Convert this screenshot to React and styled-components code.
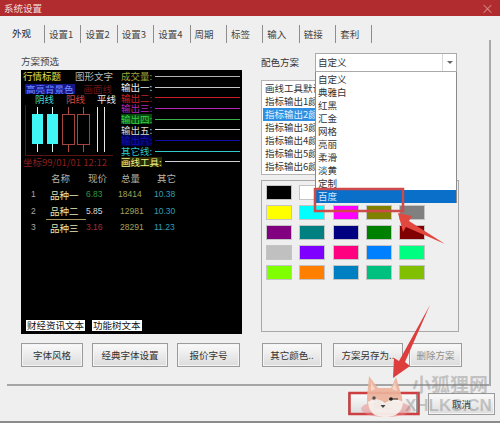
import React from "react";
import styled, { createGlobalStyle } from "styled-components";

const Global = createGlobalStyle`
  html, body { margin: 0; padding: 0; background: #f0f0f0; }
  * { box-sizing: border-box; }
`;
const FONT = `"Noto Sans CJK SC", "Noto Sans", sans-serif`;

const Window = styled.div`
  position: relative; width: 500px; height: 423px; overflow: hidden;
  display: flex; flex-direction: column;
  background: #efefef; font: 9.5px/1.1 ${FONT}; color: #333;
  border-bottom: 2px solid #8c8c8c;
`;
const TitleBar = styled.div`
  height: 16px; flex: none; background: #b12c2f; color: #f1dcdc;
  display: flex; align-items: center; justify-content: space-between;
  padding: 0 4px; font-size: 9.5px;
`;
const Close = styled.span`color: #d98a88; font-size: 13px; margin-right: 2px;`;
const TabBar = styled.div`
  height: 28px; margin-bottom: -4px; padding: 9px 0 0 8px; display: flex; flex: none;
`;
const Tab = styled.div`
  width: ${p => (p.$active ? 36 : 36.4)}px; height: 18px; display: flex; align-items: center;
  padding-left: 4px; color: #444;
  border-left: ${p => (p.$active ? "none" : "1px solid #8d8d8d")};
  ${p => p.$last && "border-right: 1px solid #8d8d8d;"}
  ${p => p.$active && "padding-bottom: 2px; color: #222;"}
`;
const Panel = styled.div`
  margin-left: 7px; width: 484px; height: 346px; flex: none; padding: 12px 0 0 13px;
  border-right: 2px solid #a9a9a9; border-bottom: 2px solid #a5a5a5;
`;
const Main = styled.div`display: flex; height: 282px;`;
const LeftCol = styled.div`width: 222px; display: flex; flex-direction: column;`;
const Caption = styled.div`height: 18px; padding-left: 1px; display: flex; align-items: center; color: #444;`;
const Preview = styled.div`
  width: 221px; height: 264px; background: #000; display: flex; flex-direction: column;
  font-size: 9.5px; margin-left: 1px;
`;
const Upper = styled.div`display: flex; height: 98px; flex: none;`;
const ChartSide = styled.div`width: 100px; flex: none; display: flex; flex-direction: column; padding-top: 1px;`;
const TextLine = styled.div`
  display: flex; height: ${p => p.$h || 10}px; margin-top: ${p => p.$mt || 0}px;
  padding-left: ${p => p.$pl || 0}px; gap: ${p => p.$gap || 0}px; align-items: center;
`;
const Tone = styled.span`color: ${p => p.$c}; background: ${p => p.$bg || "transparent"}; white-space: nowrap; ${p => p.$bg && "padding: 0 1px;"}`;
const Legend = styled.div`flex: 1; padding-top: 1px; padding-right: 2px;`;
const LegendRow = styled.div`display: flex; align-items: center; height: 10.7px; gap: 3px;`;
const LegendLabel = styled.span`color: ${p => p.$c}; background: ${p => p.$bg || "transparent"}; white-space: nowrap;`;
const LegendLine = styled.i`flex: 1; height: 1px; background: ${p => p.$c};`;
const QuoteGrid = styled.div`
  display: grid; grid-template-columns: 27px 38px 32px 36px 1fr;
  grid-auto-rows: 16.5px; margin-top: 2px; align-items: center;
`;
const Head = styled.div`color: #b5b5a8; padding-left: ${p => p.$pl || 0}px;`;
const Cell = styled.div`
  color: ${p => p.$c}; font: 8.5px/1.1 "Liberation Sans", sans-serif; padding-left: ${p => p.$pl || 0}px;
`;
const Name = styled.div`
  color: #e6e6b8; margin-left: -2px; padding-left: 4px; height: 100%; display: flex; align-items: center;
  ${p => p.$sel && "border-bottom: 1px solid #a8985f;"}
`;
const Footer = styled.div`margin-top: auto; display: flex; gap: 7px; padding: 0 0 3px 5px;`;
const Tag = styled.div`background: #fff; color: #111; height: 11px; display: flex; align-items: center; padding: 0 1px;`;
const RightCol = styled.div`width: 200px; margin-left: 19px; padding-top: 1px; position: relative;`;
const ComboRow = styled.div`display: flex; align-items: center; height: 19px;`;
const ComboLabel = styled.div`width: 54px; flex: none; color: #333;`;
const Combo = styled.div`
  position: relative; width: 142px; height: 19px; background: #fff; border: 1px solid #aaa;
  display: flex; align-items: center; justify-content: space-between; padding-left: 2px; color: #333;
`;
const Arrow = styled.div`
  width: 14px; height: 100%; border-left: 1px solid #d8d8d8; display: flex; align-items: center; justify-content: center;
  &::after { content: ""; border: 3px solid transparent; border-top: 3px solid #666; margin-top: 3px; }
`;
const DropList = styled.div`
  position: absolute; left: -1px; top: 18px; width: 142px; height: 131px; background: #fff;
  border: 1px solid #8a8a8a; border-top: none; padding-top: 1px; z-index: 2;
`;
const DropItem = styled.div`
  height: 13px; display: flex; align-items: center; padding-left: 2px; color: ${p => (p.$sel ? "#cfe6ff" : "#333")};
  background: ${p => (p.$sel ? "#0a6fc9" : "transparent")};
`;
const ListBox = styled.div`
  margin-top: 8px; width: 190px; height: 95px; background: #fff; border: 1px solid #b4b4b4; padding: 1px;
`;
const ListItem = styled.div`
  height: 13px; display: flex; align-items: center; padding-left: 2px; white-space: nowrap;
  color: ${p => (p.$sel ? "#e4f1ff" : "#333")}; background: ${p => (p.$sel ? "#2f8fe0" : "transparent")};
`;
const ColorBox = styled.div`
  margin-top: 5px; width: 198px; height: 152px; border: 1px solid #a8a8a8; padding: 4px;
  display: grid; grid-template-columns: repeat(5, 26px); column-gap: 7.3px; row-gap: 5px; grid-auto-rows: 15px;
  align-content: start;
`;
const Swatch = styled.div`background: ${p => p.$c}; border: 1px solid #c4c4c4;`;
const ButtonRow = styled.div`display: flex; margin-top: 9px; padding-left: 1px;`;
const Btn = styled.div`
  width: ${p => p.$w}px; height: ${p => p.$h || 24}px; margin-left: ${p => p.$ml || 0}px; flex: none;
  display: flex; align-items: center; justify-content: center;
  background: linear-gradient(#fafafa, #dcdcdc); border: 1px solid #9b9b9b;
  color: ${p => (p.$off ? "#8e8e8e" : "#333")};
  box-shadow: inset 0 0 0 1px #f4f4f4;
`;
const BottomBar = styled.div`display: flex; justify-content: flex-end; padding: 7px 5px 0 0;`;
const Overlay = styled.svg`position: absolute; left: 0; top: 0; pointer-events: none; z-index: 5;`;
const Watermark = styled.div`
  position: absolute; left: 405px; top: 373px; width: 90px; z-index: 6;
  color: rgba(120, 120, 120, .38); font-weight: 700; pointer-events: none;
`;
const WmCn = styled.div`font-size: 19px; line-height: 21px; padding-left: 7px;`;
const WmEn = styled.div`font: 700 17px/19px "Liberation Sans", sans-serif; margin-top: 2px;`;

const tabs = ["设置1", "设置2", "设置3", "设置4", "周期", "标签", "输入", "链接", "套利"];
const legend = [
  ["成交量:", "#a3a33a", "#b5b5b5"], ["输出一:", "#f0f0f0", "#c8c8c8"], ["输出二:", "#c8202a", "#c8202a"],
  ["输出三:", "#b328b3", "#b328b3"], ["输出四:", "#38d048", "#38b048", "#064a10"], ["输出五:", "#dcdcdc", "#d8d8d8"],
  ["输出六:", "#1010b0", "#1010a8", "#000050"], ["其它线:", "#30c8c8", "#30c8c8"], ["画线工具:", "#f0f088", "#d0d0d0", "#2a2a00"],
];
const rows = [
  ["1", "品种一", "6.83", "#2f9a3c", "18414", "10.38", false, 2],
  ["2", "品种二", "5.85", "#d8d8d8", "12981", "10.30", true, 4],
  ["3", "品种三", "3.16", "#a52d3a", "28291", "11.23", false, 4],
];
const dropItems = ["自定义", "典雅白", "红黑", "汇金", "网格", "亮丽", "柔滑", "淡黄", "定制", "百度"];
const listItems = ["画线工具默认颜色", "指标输出1颜色", "指标输出2颜色", "指标输出3颜色", "指标输出4颜色", "指标输出5颜色", "指标输出6颜色"];
const swatches = ["#000", "#fff", "#f00", "#0f0", "#00f",
  "#ff0", "#0ff", "#f0f", "#808000", "#808080",
  "#800080", "#008080", "#000080", "#008000", "#800000",
  "#c0c0c0", "#8000ff", "#ff0080", "#0080ff", "#00ff80",
  "#80ff00", "#ff8000", "#0080c0", "#00c080", "#80c000"];
const buttons = [["字体风格", 62, 0], ["经典字体设置", 76, 9], ["报价字号", 63, 9], ["其它颜色..", 60, 22], ["方案另存为..", 70, 11], ["删除方案", 53, 6, true]];

const Candles = () => (
  <svg width="100" height="52" viewBox="0 0 100 52" style={{ display: "block", flex: "none" }}>
    <path d="M4.5 0V50.5H92" fill="none" stroke="#5a1414" />
    {[11, 26].map(x => (
      <g key={x}>
        <path d={`M${x + 5.5} 2V47`} stroke="#d8f8f8" />
        <rect x={x} y="9" width="11" height="30" fill="#3ff5f5" />
      </g>
    ))}
    {[41, 56].map(x => (
      <g key={x}>
        <path d={`M${x + 6.5} 2V47`} stroke="#b04a44" />
        <rect x={x + 0.5} y="9.5" width="12" height="30" fill="#000" stroke="#a5453f" />
      </g>
    ))}
    <path d="M76.5 2V47M83.5 2V47" stroke="#e8e8e8" />
  </svg>
);

const Annotations = () => (
  <Overlay width="500" height="423" viewBox="0 0 500 423">
    <rect x="315" y="189" width="88" height="22" fill="none" stroke="#cf4a4a" strokeWidth="2.5" />
    <polygon points="398,213 412,216 409,221 445,244 406,227 403,232" fill="#e2483f" />
    <rect x="349.5" y="393" width="69" height="21" fill="none" stroke="#cd3f41" strokeWidth="2.5" />
    <polygon points="430,305 405,362 410,366 393,378 394,358 399,361" fill="#dd3d3d" />
    <ellipse cx="386" cy="409" rx="25" ry="8" fill="#e88" opacity=".5" />
    <g opacity=".92">
      <path d="M369 376 L378 388 L391 388 L396 377 L402 397 Q404 417 385 417 Q366 417 367 397 Z" fill="#edb39c" />
      <path d="M368 402 Q376 396 385 403 Q394 396 403 402 Q402 417 385 417 Q369 417 368 402 Z" fill="#f7f2ee" />
      <path d="M371 382 L375 389 L371 391 Z M395 382 L392 389 L397 391 Z" fill="#f5d5c8" />
    </g>
    <circle cx="374" cy="398" r="1.8" fill="#555" />
    <circle cx="391" cy="399" r="1.8" fill="#222" />
    <path d="M389 399H398" stroke="#222" strokeWidth="1" />
    <path d="M380.500 405h5l-2.500 3z" fill="#444" />
  </Overlay>
);

export default function App() {
  return (
    <Window>
      <Global />
      <TitleBar>系统设置<Close>×</Close></TitleBar>
      <TabBar>
        <Tab $active>外观</Tab>
        {tabs.map((t, i) => <Tab key={t} $last={i === tabs.length - 1}>{t}</Tab>)}
      </TabBar>
      <Panel>
        <Main>
          <LeftCol>
            <Caption>方案预选</Caption>
            <Preview>
              <Upper>
                <ChartSide>
                  <TextLine $h={11} $pl={2} $gap={14}>
                    <Tone $c="#e6e24a">行情标题</Tone>
                    <Tone $c="#b8b8b8">图形文字</Tone>
                  </TextLine>
                  <TextLine $mt={2} $pl={4} $gap={9}>
                    <Tone $c="#6f8cff" $bg="#15158c">高亮背景色</Tone>
                    <Tone $c="#6a1616">画面线</Tone>
                  </TextLine>
                  <TextLine $h={11} $pl={14} $gap={12}>
                    <Tone $c="#40d8d0">阴线</Tone>
                    <Tone $c="#d04a44">阳线</Tone>
                    <Tone $c="#eee">平线</Tone>
                  </TextLine>
                  <Candles />
                  <TextLine $pl={2}><Tone $c="#8c1f1f">坐标99/01/01 12:12</Tone></TextLine>
                </ChartSide>
                <Legend>
                  {legend.map(([l, c, lc, bg]) => (
                    <LegendRow key={l}>
                      <LegendLabel $c={c} $bg={bg}>{l}</LegendLabel>
                      <LegendLine $c={lc} />
                    </LegendRow>
                  ))}
                </Legend>
              </Upper>
              <QuoteGrid>
                <span />
                <Head $pl={3}>名称</Head>
                <Head $pl={2}>现价</Head>
                <Head $pl={3}>总量</Head>
                <Head $pl={3}>其它</Head>
                {rows.map(([n, name, p, pc, v, o, sel, vp]) => (
                  <React.Fragment key={n}>
                    <Cell $c="#a8a8a8" $pl={10}>{n}</Cell>
                    <Name $sel={sel}>{name}</Name>
                    <Cell $c={pc} $pl={0}>{p}</Cell>
                    <Cell $c="#a3a35a" $pl={vp - 2}>{v}</Cell>
                    <Cell $c="#2f9fb8">{o}</Cell>
                  </React.Fragment>
                ))}
              </QuoteGrid>
              <Footer>
                <Tag>财经资讯文本</Tag>
                <Tag>功能树文本</Tag>
              </Footer>
            </Preview>
          </LeftCol>
          <RightCol>
            <ComboRow>
              <ComboLabel>配色方案</ComboLabel>
              <Combo>
                自定义
                <Arrow />
                <DropList>
                  {dropItems.map(d => <DropItem key={d} $sel={d === "百度"}>{d}</DropItem>)}
                </DropList>
              </Combo>
            </ComboRow>
            <ListBox>
              {listItems.map((d, i) => <ListItem key={d} $sel={i === 2}>{d}</ListItem>)}
            </ListBox>
            <ColorBox>
              {swatches.map((c, i) => <Swatch key={i} $c={c} />)}
            </ColorBox>
          </RightCol>
        </Main>
        <ButtonRow>
          {buttons.map(([t, w, ml, off]) => <Btn key={t} $w={w} $ml={ml} $off={off}>{t}</Btn>)}
        </ButtonRow>
      </Panel>
      <BottomBar>
        <Btn $w={69} $h={22}>确定</Btn>
        <Btn $w={67} $h={22} $ml={11}>取消</Btn>
      </BottomBar>
      <Annotations />
      <Watermark>
        <WmCn>小狐狸网</WmCn>
        <WmEn>XHLKS.CN</WmEn>
      </Watermark>
    </Window>
  );
}
